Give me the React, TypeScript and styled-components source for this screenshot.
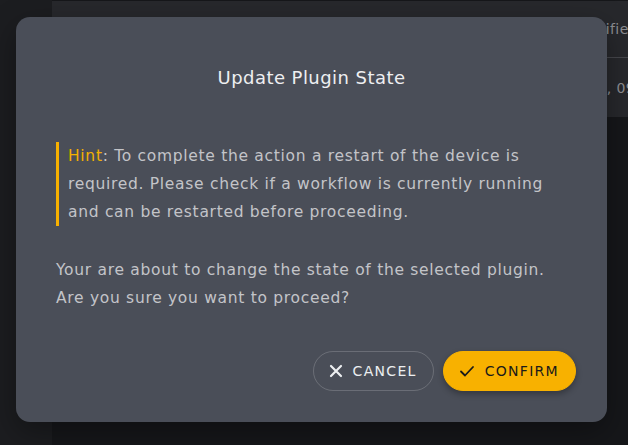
import React from 'react';
import styled, { createGlobalStyle } from 'styled-components';

const GlobalStyle = createGlobalStyle`
  html, body {
    margin: 0;
    padding: 0;
    background: #16171a;
    font-family: 'DejaVu Sans', 'Liberation Sans', sans-serif;
  }
  #root {
    width: 628px;
    height: 445px;
    overflow: hidden;
  }
`;

const Screen = styled.div`
  position: relative;
  width: 628px;
  height: 445px;
  background: #16171a;
  display: grid;
  grid-template-columns: 52px 1fr;
`;

const SideRail = styled.div`
  background: #1c1d20;
`;

const Content = styled.div`
  display: flex;
  flex-direction: column;
  min-width: 0;
`;

const TablePanel = styled.div`
  margin-top: 1px;
  height: 116px;
  background: #27282c;
  display: flex;
  flex-direction: column;
  color: #8e8f93;
  font-size: 14px;
  letter-spacing: 0.4px;
`;

const TableRow = styled.div<{ $height: number; $indent: number; $divider?: boolean }>`
  height: ${(p) => p.$height}px;
  display: flex;
  align-items: center;
  padding-left: ${(p) => p.$indent}px;
  border-bottom: ${(p) => (p.$divider ? '1px solid #46474c' : 'none')};
  white-space: nowrap;
  overflow: hidden;
`;

const Backdrop = styled.div`
  position: absolute;
  inset: 0;
  display: flex;
  align-items: flex-start;
  justify-content: flex-start;
  padding: 17px 0 0 16px;
`;

const Dialog = styled.div`
  width: 591px;
  height: 405px;
  box-sizing: border-box;
  background: #4a4e58;
  border-radius: 14px;
  padding: 0 40px;
  display: flex;
  flex-direction: column;
  box-shadow: 0 10px 30px rgba(0, 0, 0, 0.35);
`;

const Title = styled.h2`
  margin: 48px 0 0;
  text-align: center;
  font-size: 18px;
  font-weight: 400;
  letter-spacing: 0.45px;
  color: #eeeff1;
  line-height: 26px;
`;

const Hint = styled.div`
  margin-top: 51px;
  border-left: 3px solid #f8b100;
  padding-left: 9px;
  font-size: 15.5px;
  letter-spacing: 0.7px;
  line-height: 28px;
  color: #c3c4c8;
`;

const HintLabel = styled.span`
  color: #f3b100;
`;

const Body = styled.p`
  margin: 30px 0 0;
  font-size: 15.5px;
  letter-spacing: 0.7px;
  line-height: 28px;
  color: #c3c4c8;
`;

const Actions = styled.div`
  margin: 39px -9px 0 0;
  display: flex;
  justify-content: flex-end;
  gap: 9px;
`;

const ActionButton = styled.button<{ $primary?: boolean }>`
  height: 40px;
  box-sizing: border-box;
  border-radius: 20px;
  padding: 0 16px 0 15px;
  display: flex;
  align-items: center;
  gap: 10px;
  font-family: inherit;
  font-size: 14px;
  font-weight: 500;
  letter-spacing: 1.3px;
  cursor: pointer;
  border: 1px solid ${(p) => (p.$primary ? '#f8b100' : 'rgba(255,255,255,0.18)')};
  background: ${(p) => (p.$primary ? '#f8b100' : 'transparent')};
  color: ${(p) => (p.$primary ? '#1a1a1a' : '#eceef0')};
  box-shadow: ${(p) => (p.$primary ? '0 3px 6px rgba(0,0,0,0.3)' : 'none')};
`;

function CloseIcon() {
  return (
    <svg width="14" height="14" viewBox="0 0 14 14" fill="none" stroke="currentColor" strokeWidth="2.2" strokeLinecap="round">
      <path d="M2 2 L12 12 M12 2 L2 12" />
    </svg>
  );
}

function CheckIcon() {
  return (
    <svg width="16" height="14" viewBox="0 0 16 14" fill="none" stroke="currentColor" strokeWidth="1.8" strokeLinecap="round" strokeLinejoin="round">
      <path d="M2 7.5 L6 11.5 L14 3" />
    </svg>
  );
}

export default function App() {
  return (
    <>
      <GlobalStyle />
      <Screen>
        <SideRail />
        <Content>
          <TablePanel>
            <TableRow $height={56} $indent={523} $divider>
              Modified
            </TableRow>
            <TableRow $height={59} $indent={466}>
              Mar 4, 2024, 09:15
            </TableRow>
          </TablePanel>
        </Content>
        <Backdrop>
          <Dialog>
            <Title>Update Plugin State</Title>
            <Hint>
              <HintLabel>Hint</HintLabel>: To complete the action a restart of the device is required. Please check
              if a workflow is currently running and can be restarted before proceeding.
            </Hint>
            <Body>
              Your are about to change the state of the selected plugin.
              <br />
              Are you sure you want to proceed?
            </Body>
            <Actions>
              <ActionButton>
                <CloseIcon />
                CANCEL
              </ActionButton>
              <ActionButton $primary>
                <CheckIcon />
                CONFIRM
              </ActionButton>
            </Actions>
          </Dialog>
        </Backdrop>
      </Screen>
    </>
  );
}
